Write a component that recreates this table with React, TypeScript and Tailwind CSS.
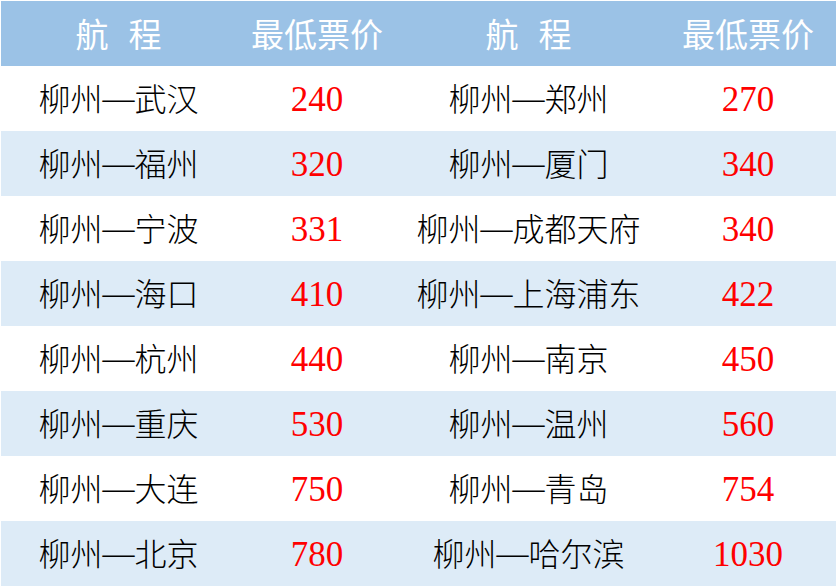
const rows: [string, string, string, string][] = [
  ['柳州|武汉', '240', '柳州|郑州', '270'],
  ['柳州|福州', '320', '柳州|厦门', '340'],
  ['柳州|宁波', '331', '柳州|成都天府', '340'],
  ['柳州|海口', '410', '柳州|上海浦东', '422'],
  ['柳州|杭州', '440', '柳州|南京', '450'],
  ['柳州|重庆', '530', '柳州|温州', '560'],
  ['柳州|大连', '750', '柳州|青岛', '754'],
  ['柳州|北京', '780', '柳州|哈尔滨', '1030'],
];

const cols = 'grid grid-cols-[235px_162px_261px_178px]';
const cjk = "font-['Noto_Sans_CJK_SC',sans-serif]";
const num = "font-['Liberation_Serif','Noto_Sans_CJK_SC',serif]";

function Route({ text }: { text: string }) {
  const [from, to] = text.split('|');
  return (
    <div className={`flex items-center justify-center pb-[3px] text-[32px] text-black ${cjk} font-light`}>
      <span>{from}</span>
      <span className="font-['Liberation_Serif',serif] font-normal pt-[2px]">—</span>
      <span>{to}</span>
    </div>
  );
}

export default function App() {
  return (
    <div className="w-[836px] h-[587px] bg-white pt-px pl-px overflow-hidden">
      <div className={`${cols} h-[65px] bg-[#9bc2e6] text-white text-[33px] ${cjk}`}>
        <div className="flex items-center justify-center gap-[20px]">
          <span>航</span>
          <span>程</span>
        </div>
        <div className="flex items-center justify-center">最低票价</div>
        <div className="flex items-center justify-center gap-[20px]">
          <span>航</span>
          <span>程</span>
        </div>
        <div className="flex items-center justify-center">最低票价</div>
      </div>
      {rows.map((r, i) => (
        <div
          key={i}
          className={`${cols} h-[65px] ${i % 2 === 1 ? 'bg-[#ddebf7]' : 'bg-white'}`}
        >
          <Route text={r[0]} />
          <div className={`flex items-center justify-center pt-[4px] text-[35px] text-[#ff0000] ${num}`}>
            {r[1]}
          </div>
          <Route text={r[2]} />
          <div className={`flex items-center justify-center pt-[4px] text-[35px] text-[#ff0000] ${num}`}>
            {r[3]}
          </div>
        </div>
      ))}
    </div>
  );
}
